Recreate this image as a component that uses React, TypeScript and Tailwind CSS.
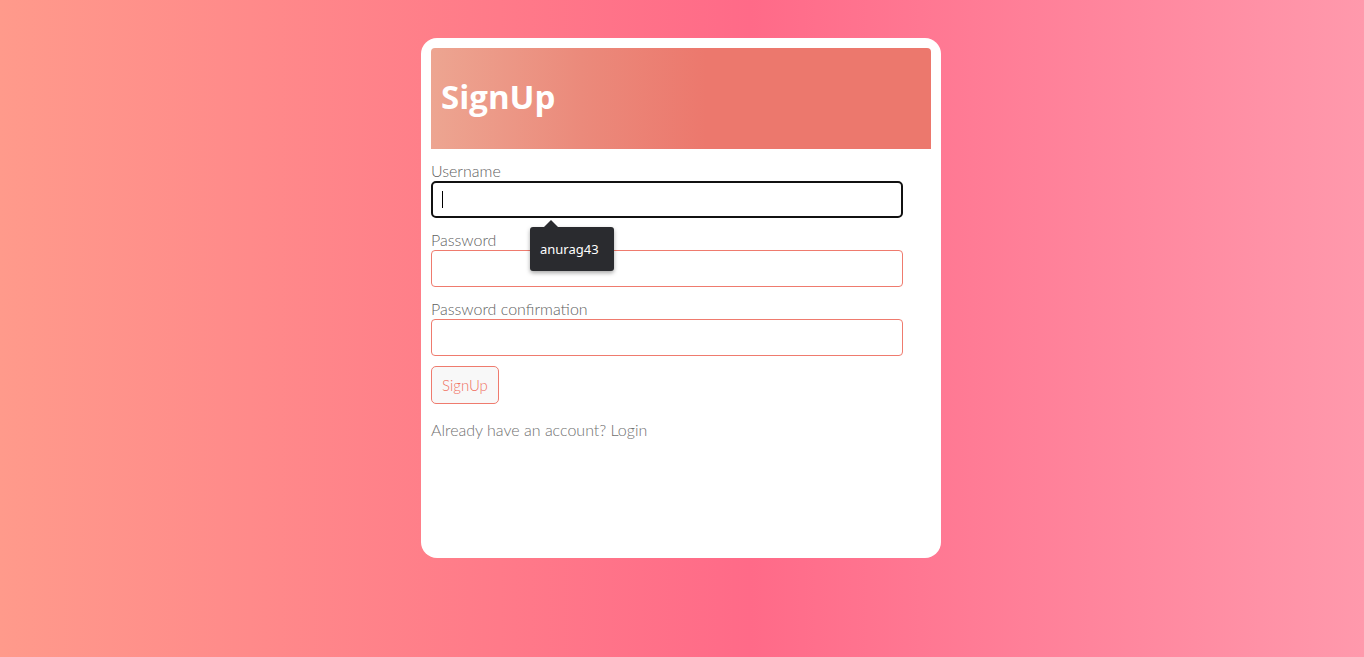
import React from "react";

const Field = ({ label, focused }: { label: string; focused?: boolean }) => (
  <div className="flex flex-col">
    <label className="text-[16px] leading-[20px] text-[#5f5f5f] font-light">{label}</label>
    {focused ? (
      <div className="relative h-[37px] w-[472px] rounded-[5px] border-2 border-[#111] bg-white">
        <span className="absolute left-[9px] top-[8px] h-[17px] w-px bg-black" />
      </div>
    ) : (
      <div className="h-[37px] w-[472px] rounded-[4px] border border-[#ef7b6e] bg-white" />
    )}
  </div>
);

export default function App() {
  return (
    <div
      className="min-h-[657px] w-full flex justify-center pt-[38px] pr-[2px] bg-[linear-gradient(90deg,#ff9a8b_0%,#ff6a88_55%,#ff99ac_100%)]"
      style={{ fontFamily: "Lato, 'Noto Sans', sans-serif" }}
    >
      <div className="h-[520px] w-[520px] rounded-[16px] bg-white p-[10px]">
        <div className="flex h-[101px] items-center rounded-t-[4px] px-[10px] pb-[4px] bg-[linear-gradient(90deg,#eda591_0%,#eb8a7b_30%,#ec786d_55%,#ec786d_100%)]">
          <h1 className="text-[33px] font-bold text-white leading-none" style={{ fontFamily: "'Open Sans', 'Noto Sans', sans-serif" }}>
            SignUp
          </h1>
        </div>
        <div className="relative mt-[12px] flex flex-col gap-[12px]">
          <Field label="Username" focused />
          <Field label="Password" />
          <Field label="Password confirmation" />
          <div className="-mt-[2px]">
            <button className="h-[38px] rounded-[5px] border border-[#ef7b6e] bg-[#f8f8f8] px-[10px] text-[15px] text-[#f0705f] font-light">
              SignUp
            </button>
          </div>
          <p className="mt-[4px] text-[16px] leading-[20px] text-[#707070] font-light">Already have an account? Login</p>
          <div className="absolute left-[99px] top-[66px] flex h-[44px] w-[84px] items-center rounded-[3px] bg-[#2a2b2f] px-[10px] shadow-[0_2px_4px_rgba(0,0,0,0.35)]">
            <span className="absolute -top-[7px] left-[13px] h-0 w-0 border-x-[8px] border-b-[8px] border-x-transparent border-b-[#2a2b2f]" />
            <span className="text-[13px] leading-[18px] text-white" style={{ fontFamily: "'Noto Sans', sans-serif" }}>
              anurag43
            </span>
          </div>
        </div>
      </div>
    </div>
  );
}
